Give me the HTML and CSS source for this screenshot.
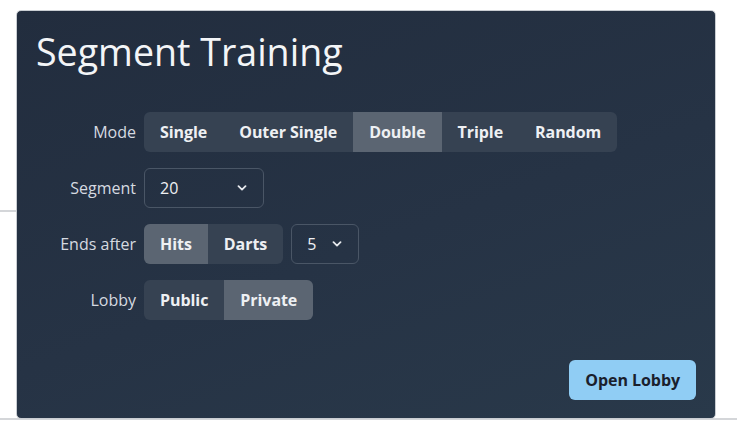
FILE: index.html
```html
<!DOCTYPE html>
<html>
<head>
<meta charset="utf-8">
<link rel="stylesheet" href="styles.css">
</head>
<body>
<div class="card">
  <h1 class="title">Segment Training</h1>
  <div class="form">
    <div class="label">Mode</div>
    <div class="field">
      <div class="group">
        <button class="seg">Single</button>
        <button class="seg">Outer Single</button>
        <button class="seg active">Double</button>
        <button class="seg">Triple</button>
        <button class="seg">Random</button>
      </div>
    </div>
    <div class="label">Segment</div>
    <div class="field">
      <div class="select w120">
        <span>20</span>
        <svg class="chev" width="10" height="6" viewBox="0 0 10 6"><path d="M1.5 1.2 L5 4.6 L8.5 1.2" fill="none" stroke="#e6e9ed" stroke-width="1.8" stroke-linecap="round" stroke-linejoin="round"/></svg>
      </div>
    </div>
    <div class="label">Ends after</div>
    <div class="field">
      <div class="group">
        <button class="seg active">Hits</button>
        <button class="seg">Darts</button>
      </div>
      <div class="select w68">
        <span>5</span>
        <svg class="chev" width="10" height="6" viewBox="0 0 10 6"><path d="M1.5 1.2 L5 4.6 L8.5 1.2" fill="none" stroke="#e6e9ed" stroke-width="1.8" stroke-linecap="round" stroke-linejoin="round"/></svg>
      </div>
    </div>
    <div class="label">Lobby</div>
    <div class="field">
      <div class="group">
        <button class="seg">Public</button>
        <button class="seg active">Private</button>
      </div>
    </div>
  </div>
  <div class="footer">
    <button class="primary">Open Lobby</button>
  </div>
</div>
</body>
</html>
```
FILE: styles.css
```css
html, body {
  margin: 0;
  padding: 0;
}
body {
  width: 737px;
  height: 441px;
  background-color: #ffffff;
  background-image:
    linear-gradient(#d4d6d9, #d4d6d9),
    linear-gradient(#d4d6d9, #d4d6d9);
  background-repeat: no-repeat;
  background-size: 16px 2px, 737px 2px;
  background-position: 0 210px, 0 418px;
  font-family: "Open Sans", "Noto Sans", sans-serif;
  padding-top: 10px;
  padding-left: 16px;
  box-sizing: border-box;
}
.card {
  width: 700px;
  height: 409px;
  box-sizing: border-box;
  border: 1px solid #c9cdd2;
  border-radius: 5px;
  background: linear-gradient(160deg, #222d3e 0%, #263345 55%, #29394a 100%);
  padding: 19px 19px 18px 19px;
  display: flex;
  flex-direction: column;
}
.title {
  margin: 0;
  font-weight: 400;
  font-size: 37.6px;
  line-height: 44px;
  color: #f3f5f7;
}
.form {
  margin-top: 38px;
  display: grid;
  grid-template-columns: 100px auto;
  column-gap: 8px;
  row-gap: 16px;
  align-items: center;
}
.label {
  text-align: right;
  font-size: 16px;
  color: #d6dae0;
}
.field {
  display: flex;
  gap: 8px;
  align-items: center;
}
.group {
  display: flex;
  background: #364252;
  border-radius: 6px;
  overflow: hidden;
  height: 40px;
}
.seg {
  border: 0;
  background: transparent;
  color: #eef0f3;
  font-family: inherit;
  font-weight: 700;
  font-size: 16px;
  letter-spacing: -0.06px;
  padding: 0 16px;
  height: 40px;
  cursor: pointer;
}
.seg.active {
  background: #5b6572;
}
.select {
  box-sizing: border-box;
  height: 40px;
  border: 1px solid #4a5666;
  border-radius: 6px;
  display: flex;
  align-items: center;
  justify-content: space-between;
  padding: 0 16px 0 15px;
  color: #eef0f3;
  font-size: 16px;
}
.w120 { width: 120px; }
.w68 { width: 68px; }
.chev { display: block; }
.footer {
  margin-top: auto;
  display: flex;
  justify-content: flex-end;
}
.primary {
  border: 0;
  background: #90cdf4;
  color: #1a202c;
  font-family: inherit;
  font-weight: 700;
  font-size: 16px;
  letter-spacing: -0.06px;
  height: 40px;
  padding: 0 16px;
  border-radius: 6px;
}
```
